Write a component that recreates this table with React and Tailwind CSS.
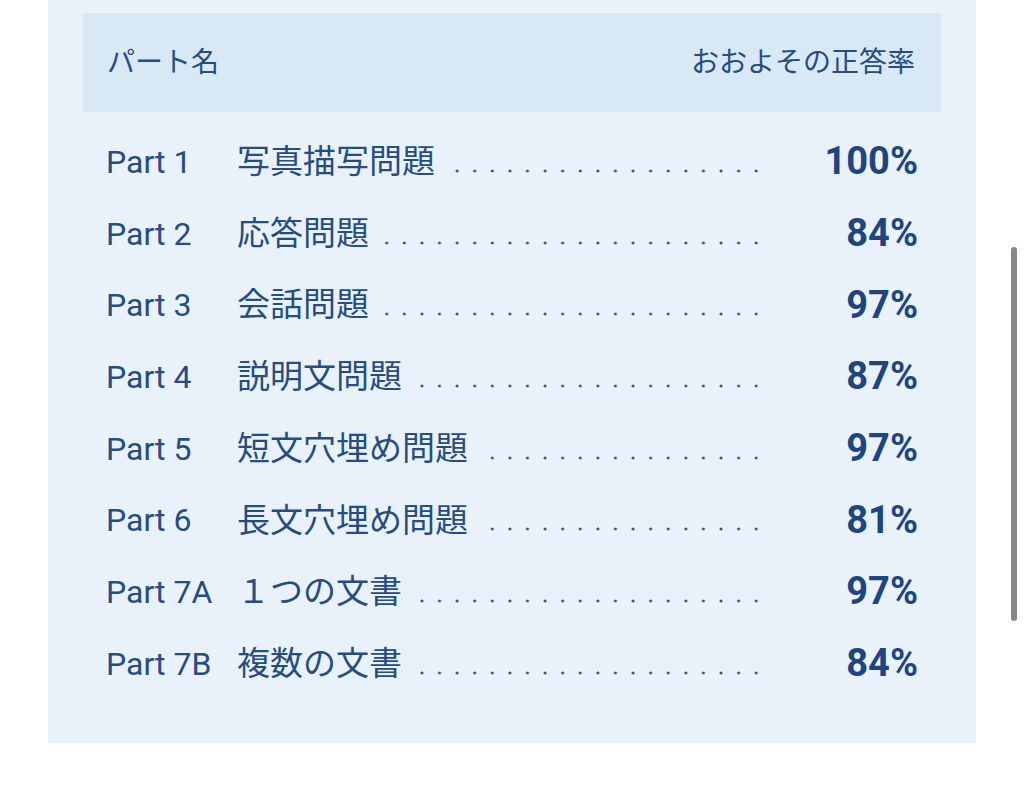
import React from 'react';

const rows = [
    { part: 'Part 1', title: '写真描写問題', rate: '100%' },
    { part: 'Part 2', title: '応答問題', rate: '84%' },
    { part: 'Part 3', title: '会話問題', rate: '97%' },
    { part: 'Part 4', title: '説明文問題', rate: '87%' },
    { part: 'Part 5', title: '短文穴埋め問題', rate: '97%' },
    { part: 'Part 6', title: '長文穴埋め問題', rate: '81%' },
    { part: 'Part 7A', title: '１つの文書', rate: '97%' },
    { part: 'Part 7B', title: '複数の文書', rate: '84%' },
];

export default function App() {
    return (
        <div className="relative w-[1024px] h-[787px] bg-white overflow-hidden font-['Roboto','Noto_Sans_CJK_JP',sans-serif] text-[#264c84]">
            <section className="ml-[48px] w-[928px] h-[743px] bg-[#e9f2fa] pt-[13px]">
                {/* header */}
                <div className="mx-[35px] h-[99px] bg-[#d9e8f5] flex items-center justify-between pl-[24px] pr-[26px] text-[28px]">
                    <span>パート名</span>
                    <span>おおよその正答率</span>
                </div>

                {/* rows */}
                <div className="mx-[35px] mt-[14px] pl-[23px] pr-[23px]">
                    {rows.map(({ part, title, rate }) => (
                        <div key={part} className="flex items-center h-[71.7px]">
                            <span className="w-[131px] shrink-0 text-[32px]">{part}</span>
                            <span className="shrink-0 text-[33px]">{title}</span>
                            <div className="flex-1 ml-[12px] h-[22px] bg-[radial-gradient(circle,#2a5089_1.3px,transparent_1.7px)] bg-[length:17.6px_4px] bg-repeat-x bg-[position:right_bottom]" />
                            <span className="w-[153px] shrink-0 text-right text-[38px] font-bold text-[#1f4580]">{rate}</span>
                        </div>
                    ))}
                </div>
            </section>

            {/* scrollbar */}
            <div className="absolute left-[1011px] top-[247px] w-[6px] h-[374px] rounded-full bg-[#888888]" />
        </div>
    );
}
